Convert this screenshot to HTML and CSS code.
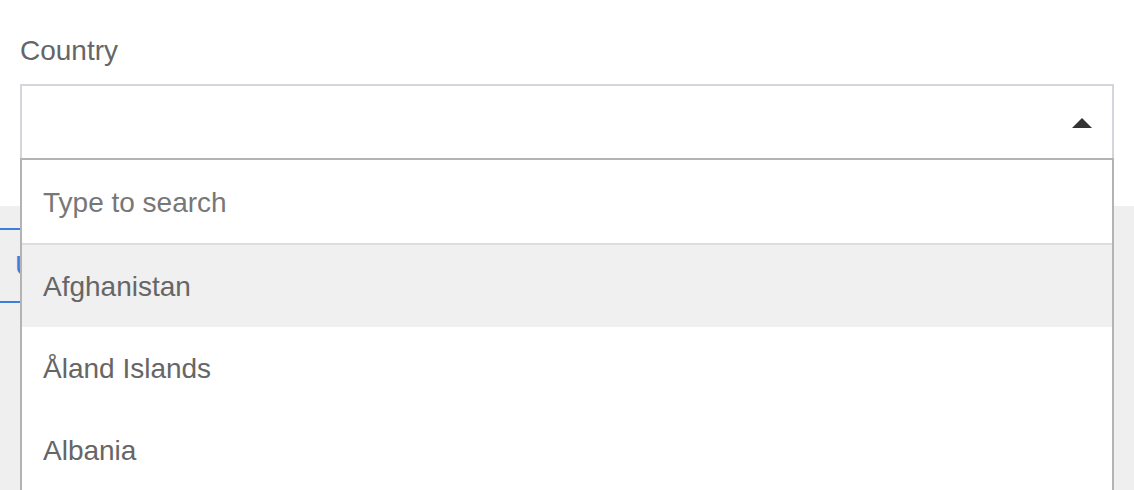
FILE: index.html
```html
<!DOCTYPE html>
<html lang="en">
<head>
<meta charset="utf-8">
<title>Country select</title>
<link rel="stylesheet" href="styles.css">
</head>
<body>
<div class="page">
  <div class="field">
    <label class="label">Country</label>
    <div class="select-wrap">
      <div class="select">
        <span class="arrow"></span>
      </div>
      <div class="dropdown">
        <div class="search">Type to search</div>
        <div class="option active">Afghanistan</div>
        <div class="option">Åland Islands</div>
        <div class="option">Albania</div>
      </div>
    </div>
  </div>
  <div class="section">
    <div class="clip">
      <div class="button">U</div>
    </div>
  </div>
</div>
</body>
</html>
```

FILE: styles.css
```css
html, body {
  margin: 0;
  padding: 0;
  background: #ffffff;
  overflow: hidden;
}
body {
  font-family: "Liberation Sans", Arial, Helvetica, sans-serif;
  font-size: 28px;
  color: #666666;
  width: 1134px;
  height: 490px;
}
.page {
  display: flex;
  flex-direction: column;
}
.field {
  padding: 35px 20px 0 20px;
  display: flex;
  flex-direction: column;
}
.label {
  display: block;
  line-height: 32px;
  height: 32px;
  margin-bottom: 17px;
  color: #666666;
}
.select-wrap {
  position: relative;
}
.select {
  box-sizing: border-box;
  height: 74px;
  border: 2px solid #d3d7db;
  border-bottom: none;
  background: #ffffff;
  display: flex;
  align-items: center;
  justify-content: flex-end;
  padding-right: 20px;
}
.arrow {
  width: 0;
  height: 0;
  border-left: 10px solid transparent;
  border-right: 10px solid transparent;
  border-bottom: 10px solid #333333;
  margin-top: 1px;
}
.dropdown {
  position: absolute;
  top: 74px;
  left: 0;
  right: 0;
  z-index: 10;
  background: #ffffff;
  border: 2px solid #b3b3b3;
  border-bottom: none;
}
.search {
  box-sizing: border-box;
  height: 85px;
  border-bottom: 2px solid #dddddd;
  padding: 2px 21px 0 21px;
  display: flex;
  align-items: center;
  color: #777777;
  line-height: 32px;
}
.option {
  box-sizing: border-box;
  height: 81.5px;
  padding: 2px 21px 0 21px;
  display: flex;
  align-items: center;
  color: #666666;
  line-height: 32px;
}
.option.active {
  background: #f0f0f0;
  height: 82px;
}
.option:last-child {
  padding-top: 4px;
}
.section {
  margin-top: 48px;
  background: #efefef;
  height: 400px;
  padding-top: 22px;
}
.clip {
  width: 21px;
  overflow: hidden;
}
.button {
  box-sizing: border-box;
  width: 80px;
  height: 75px;
  margin-left: -40px;
  padding-left: 53px;
  border: 2px solid #3b7de0;
  border-radius: 6px;
  color: #3b7de0;
  display: flex;
  align-items: center;
  line-height: 32px;
}
```
